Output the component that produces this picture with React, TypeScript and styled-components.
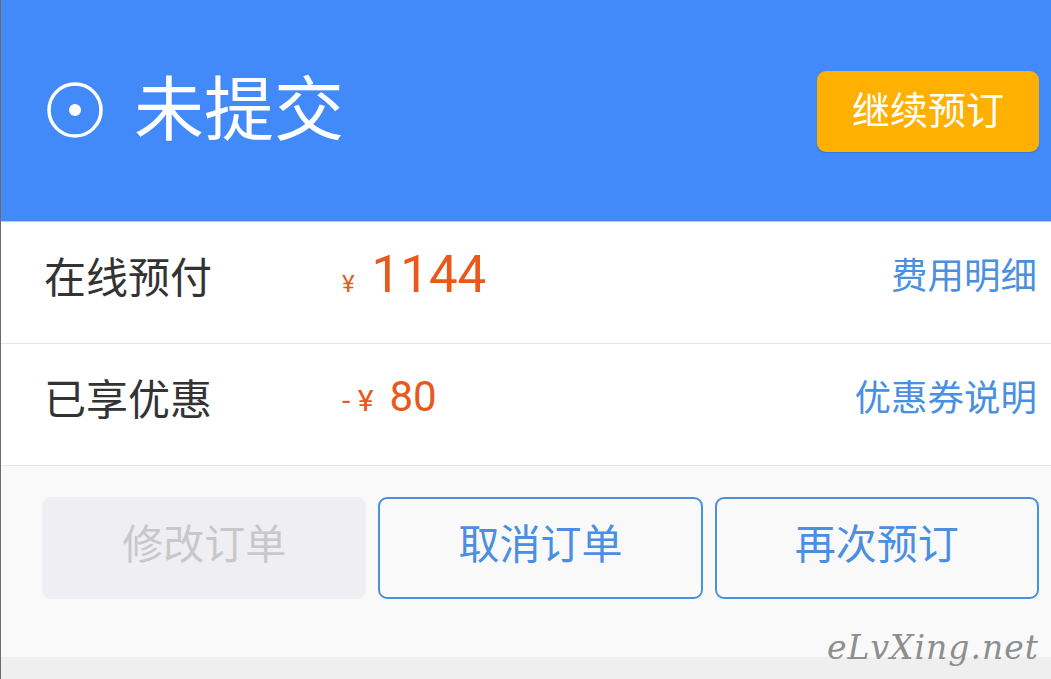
import React from "react";
import styled, { createGlobalStyle } from "styled-components";

const Global = createGlobalStyle`
  html, body { margin: 0; padding: 0; background: #f0f0f0; }
  body { font-family: "Noto Sans CJK SC", "Noto Sans", sans-serif; }
  * { box-sizing: border-box; }
`;

const Page = styled.div`
  width: 1051px;
  height: 679px;
  display: flex;
  flex-direction: column;
  border-left: 1px solid #6b6b6b;
  overflow: hidden;
  position: relative;
`;

const Header = styled.header`
  height: 222px;
  background: #4289f9;
  display: flex;
  align-items: center;
  justify-content: space-between;
  padding: 0 12px 2px 45px;
  border-bottom: 1px solid #a9ccff;
`;

const Status = styled.div`
  display: flex;
  align-items: center;
  gap: 30px;
  color: #fff;
  font-size: 70px;
  line-height: 1;
  font-weight: 400;
`;

const Title = styled.span`
  padding-bottom: 10px;
`;

const ContinueButton = styled.button`
  width: 222px;
  height: 81px;
  margin-top: 4px;
  background: #ffb000;
  border: none;
  border-radius: 9px;
  color: #fff;
  font-family: "Noto Sans CJK SC", sans-serif;
  font-size: 38px;
  padding: 0 0 8px;
  box-shadow: 0 1px 1px rgba(0, 0, 0, 0.15);
`;

const Row = styled.div`
  height: 122px;
  background: #fff;
  display: flex;
  align-items: center;
  padding: 0 14px 16px 43px;
  border-bottom: 1px solid #e6e6e6;
`;

const Label = styled.div`
  width: 298px;
  color: #333;
  font-size: 42px;
  line-height: 1;
`;

const Amount = styled.div`
  flex: 1;
  display: flex;
  align-items: baseline;
  color: #e8591c;
  font-family: Roboto, "Noto Sans", sans-serif;
`;

const Yen = styled.span<{ $size: number; $gap: number }>`
  font-size: ${(p) => p.$size}px;
  margin-right: ${(p) => p.$gap}px;
`;

const Num = styled.span<{ $size: number }>`
  font-size: ${(p) => p.$size}px;
  line-height: 1;
`;

const Link = styled.a`
  color: #4a8fe0;
  font-size: 36.5px;
  line-height: 1;
`;

const Actions = styled.div`
  flex: 1;
  background: #f9f9f9;
  display: grid;
  grid-template-columns: repeat(3, 1fr);
  gap: 12px;
  padding: 31px 12px 0 41px;
  align-content: start;
`;

const ActionButton = styled.button<{ $disabled?: boolean }>`
  height: 102px;
  border-radius: 9px;
  font-family: "Noto Sans CJK SC", sans-serif;
  font-size: 41px;
  padding: 0 0 14px;
  background: ${(p) => (p.$disabled ? "#efeff3" : "#f9f9f9")};
  color: ${(p) => (p.$disabled ? "#c8c8c8" : "#4a8fe0")};
  border: ${(p) => (p.$disabled ? "none" : "2.5px solid #4a8fe0")};
`;

const Footer = styled.div`
  height: 22px;
  background: #efefef;
`;

const Watermark = styled.div`
  position: absolute;
  right: 12px;
  bottom: 12px;
  color: #8e8e8e;
  font-family: "DejaVu Serif", "Liberation Serif", serif;
  font-style: italic;
  font-size: 33px;
  letter-spacing: 1px;
`;

const CircleIcon = () => (
  <svg width="58" height="58" viewBox="0 0 58 58">
    <circle cx="29" cy="29" r="26" fill="none" stroke="#fff" strokeWidth="3.5" />
    <circle cx="29" cy="29" r="6" fill="#fff" />
  </svg>
);

export default function App() {
  return (
    <>
      <Global />
      <Page>
        <Header>
          <Status>
            <CircleIcon />
            <Title>未提交</Title>
          </Status>
          <ContinueButton>继续预订</ContinueButton>
        </Header>
        <Row>
          <Label>在线预付</Label>
          <Amount>
            <Yen $size={24} $gap={17}>¥</Yen>
            <Num $size={51}>1144</Num>
          </Amount>
          <Link>费用明细</Link>
        </Row>
        <Row>
          <Label>已享优惠</Label>
          <Amount>
            <Yen $size={30} $gap={16}>- ¥</Yen>
            <Num $size={42}>80</Num>
          </Amount>
          <Link>优惠券说明</Link>
        </Row>
        <Actions>
          <ActionButton $disabled>修改订单</ActionButton>
          <ActionButton>取消订单</ActionButton>
          <ActionButton>再次预订</ActionButton>
        </Actions>
        <Footer />
        <Watermark>eLvXing.net</Watermark>
      </Page>
    </>
  );
}
